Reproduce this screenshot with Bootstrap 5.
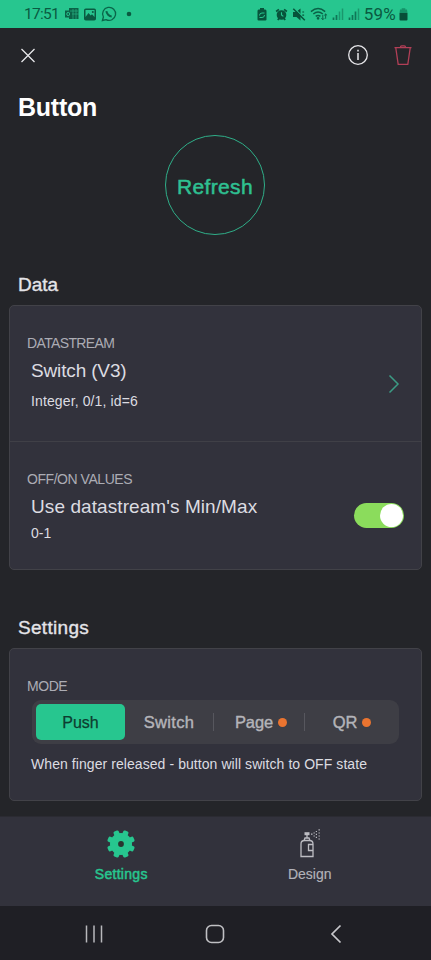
<!DOCTYPE html>
<html lang="en">
<head>
<meta charset="utf-8">
<meta name="viewport" content="width=device-width, initial-scale=1">
<title>Button</title>
<link href="https://cdn.jsdelivr.net/npm/bootstrap@5.3.0/dist/css/bootstrap.min.css" rel="stylesheet">
<style>
body{background:#242529;color:#dcdce1;font-family:"Liberation Sans",Arial,sans-serif;font-size:14px;line-height:20px;height:960px;overflow:hidden}
svg{display:block;flex:none}
.status{height:28px;background:#27c68f;color:#0a5a41;font-family:Roboto,sans-serif;padding:0 23px 0 24px}
.status-right{gap:4px}
.clock{font-size:15.5px;letter-spacing:-.75px;width:41px}
.notif-dot{margin-left:9px}
.battery-pct{font-size:17px;letter-spacing:.2px;margin-right:-1px}
.toolbar-row{height:54px;padding:0 18px 0 20px}
.toolbar-actions{gap:24px}
.page-title{font-size:25px;line-height:30px;letter-spacing:-.25px;color:#fff;margin:10px 0 0 18px}
.round-btn{width:100px;height:100px;border:1.5px solid #2fae88;background:none;color:#2fc092;font-size:21px;line-height:24px;letter-spacing:.35px;margin:13px auto 0 165px;padding:3px 0 0;-webkit-text-stroke:.5px #2fc092}
.section-title{font-size:19px;line-height:24px;color:#e4e4e8;margin:0 0 8px 18px;-webkit-text-stroke:.35px #e4e4e8}
.title-data{margin-top:38px}
.title-settings{margin-top:46px;letter-spacing:.3px}
.panel{background:#32323c;border:1px solid #424248;border-radius:5px;margin:0 9px}
.panel-line{border-bottom:1px solid #404047}
.caption-text{color:#acacb4;letter-spacing:-.45px;line-height:18px}
.caption-tight{letter-spacing:-.63px}
.value-text{font-size:19px;line-height:24px;letter-spacing:.08px;margin-top:7px}
.value-switch{letter-spacing:-.15px}
.detail-stream{margin-top:8px;letter-spacing:.12px}
.detail-range{margin-top:4px}
.chevron{margin-top:40px}
.stream-row{height:136px;padding:28px 20px 0 17px}
.range-row{height:127px;padding:28px 17px 0 17px}
.switch-pill{width:50px;height:25px;background:#8bdc5c;padding:1px;margin-top:33px}
.switch-pill span{width:23px;height:23px;background:#fff}
.mode-panel{height:153px;padding:28px 22px 0 17px}
.segment{background:#3e3e45;border-radius:9px;height:44px;margin:5px 0 0 5px;padding:4px;font-size:16.5px;color:#b4b4b9}
.seg-item{-webkit-text-stroke:.4px currentColor}
.seg-switch{letter-spacing:.3px}
.seg-pro{width:90px;letter-spacing:-.1px;padding-left:4px;gap:5px}
.seg-on{background:#27c68f;color:#0d3d30;border-radius:5px;height:36px;width:89px;font-size:16px;padding-top:1px;-webkit-text-stroke:.25px currentColor}
.seg-rule{width:1px;height:18px;background:#57575e}
.pip{width:9px;height:9px;background:#ea7430}
.mode-hint{margin-top:10px;letter-spacing:.07px}
.tabs-bar{height:90px;background:#32323c;border-top:1px solid #2b2b32;color:#b2b2b9}
.tab-item{padding-top:12px;gap:5px}
.tab-on{color:#27c68f;padding-left:27px}
.tab-on span{letter-spacing:.3px;-webkit-text-stroke:.5px #27c68f}
.tab-design{padding-right:27px}
.tab-design span{-webkit-text-stroke:.15px currentColor}
.sys-bar{height:54px;background:#1f1f25;padding:1px 88px 0 84px}
.home-key{margin-right:3px}
</style>
</head>
<body class="d-flex flex-column">
<div class="status d-flex align-items-center justify-content-between flex-shrink-0">
  <div class="d-flex align-items-center">
    <span class="clock">17:51</span>
    <svg width="14" height="12" viewBox="0 0 14 12"><path fill="#0b6247" d="M4 0h9.500v11H4V9.500H0v-7h4z"/><path d="M5 3h8M7 6h7M8 1v10M11 1v10" stroke="#27b381" stroke-width=".7"/><ellipse cx="3.200" cy="6" rx="1.400" ry="1.700" fill="none" stroke="#27c68f" stroke-width="1"/></svg>
    <svg class="ms-1" width="14" height="13" viewBox="0 0 14 13"><rect x="1" y=".5" width="12" height="12" rx="1.800" fill="#0a5a41"/><path d="M2.500 9l3-4 2.200 2.600L9 6.300l2.500 2.700V2H2.500z" fill="#27c68f"/><circle cx="9.800" cy="4" r="1" fill="#0a5a41"/></svg>
    <svg class="ms-1" width="16" height="16" viewBox="0 0 16 16" fill="none" stroke="#0a6549" stroke-width="1.300"><path d="M1.400 14.500l1-3.500A6.500 6.500 0 1 1 5 13.600z"/><path d="M5.400 5.200c.2 2.500 2.700 5.200 5.300 5.400" stroke-width="2"/></svg>
    <svg class="notif-dot" width="6" height="6"><circle cx="3" cy="3" r="2.300" fill="#0a5a41"/></svg>
  </div>
  <div class="status-right d-flex align-items-center">
    <svg width="10" height="13" viewBox="0 0 10 13"><path fill="#07543b" d="M3 0h4v1.500h1.200Q9.500 1.500 9.500 3v8.500q0 1-1.200 1H1.700q-1.200 0-1.200-1V3q0-1.500 1.200-1.500H3z"/><path d="M2.500 7.500q0-2.500 2.500-2.500h2.500M2.500 9.500H5q2.500 0 2.500-2.500" stroke="#27c68f" fill="none"/></svg>
    <svg class="ms-1" width="13" height="13" viewBox="0 0 14 13"><circle cx="7" cy="7" r="5.200" fill="#07543b"/><path d="M1.200 3.300l3-2.300M12.800 3.300l-3-2.300M3 12.500l1.500-2M11 12.500l-1.500-2" stroke="#07543b" stroke-width="1.800"/><path d="M7 4v3l2 1.500" stroke="#27c68f" stroke-width="1.200" fill="none"/></svg>
    <svg width="14" height="13" viewBox="0 0 14 13"><path d="M1 4h3l4.500-3.500v12L4.500 9H1z" fill="#07543b"/><path d="M2.300 .2l11 11" stroke="#27c68f" stroke-width="1.200"/><path d="M1.300 .7l11.500 11.500" stroke="#07543b" stroke-width="1.500"/><path d="M10.300 4h1.800M10.300 7.200h1.800" stroke="#07543b" stroke-width="1.200"/></svg>
    <svg width="18" height="14" viewBox="0 0 19 14" fill="none" stroke="#0a6046" stroke-width="1.500"><path d="M1 4.500q7.500-6.500 15 0M3.500 7q5-4.300 10 0M6 9.500q2.500-2 5 0"/><circle cx="8.500" cy="11.500" r=".7"/><path d="M13.500 8v5M12 11.500l1.500 1.500 1.500-1.500M16.500 12V7M15 8.500L16.500 7 18 8.500" stroke-width="1"/></svg>
    <svg width="12" height="12" viewBox="0 0 12 12"><path d="M1.500 12V9.500M4.500 12V7" stroke="#0f7656" stroke-width="1.700"/><path d="M7.500 12V3.500M10.500 12V.5" stroke="#1a976c" stroke-width="1.500"/></svg>
    <svg width="12" height="12" viewBox="0 0 12 12"><path d="M1.500 12V9.500M4.500 12V7M7.500 12V3.500" stroke="#0f7656" stroke-width="1.700"/><path d="M10.500 12V.5" stroke="#1a976c" stroke-width="1.500"/></svg>
    <span class="battery-pct">59%</span>
    <svg width="9" height="13" viewBox="0 0 9 13"><path fill="#159268" d="M2.700 .3h3.600v1.200H8L8.500 5H.5L1 1.500h1.700z"/><path fill="#084e38" d="M.5 5h8v6.500q0 1-1 1h-6q-1 0-1-1z"/></svg>
  </div>
</div>

<header class="toolbar-row d-flex align-items-center justify-content-between flex-shrink-0">
  <svg width="16" height="16" viewBox="0 0 16 16" stroke="#e7e7ea" stroke-width="1.300"><path d="M1.500 2l13 13M14.500 2l-13 13"/></svg>
  <div class="toolbar-actions d-flex align-items-center">
    <svg width="22" height="22" viewBox="0 0 22 22" fill="none" stroke="#e7e7ea"><circle cx="11" cy="11" r="9.300" stroke-width="1.300"/><path d="M11 9v7M11 5.800v1.600" stroke-width="1.500"/></svg>
    <svg width="20" height="22" viewBox="0 0 20 22" fill="none" stroke="#b23f57" stroke-width="1.300"><path d="M1.500 3.700h17M7.500 3.300q0-1.500 1.200-1.500h2.600q1.200 0 1.200 1.500M2.800 4l2.400 16.300h9.600L17.200 4"/></svg>
  </div>
</header>

<h1 class="page-title fw-bold flex-shrink-0">Button</h1>
<button class="round-btn rounded-circle flex-shrink-0" type="button">Refresh</button>

<h2 class="section-title title-data fw-normal flex-shrink-0">Data</h2>
<section class="panel flex-shrink-0">
  <div class="stream-row panel-line d-flex justify-content-between">
    <div>
      <div class="caption-text caption-tight">DATASTREAM</div>
      <div class="ps-1">
        <div class="value-text value-switch">Switch (V3)</div>
        <div class="detail-stream">Integer, 0/1, id=6</div>
      </div>
    </div>
    <svg class="chevron" width="15" height="20" viewBox="0 0 15 20" fill="none" stroke="#3c9b84" stroke-width="1.500"><path d="M3.500 1.500L12 10l-8.500 8.500"/></svg>
  </div>
  <div class="range-row d-flex justify-content-between">
    <div>
      <div class="caption-text">OFF/ON VALUES</div>
      <div class="ps-1">
        <div class="value-text">Use datastream's Min/Max</div>
        <div class="detail-range">0-1</div>
      </div>
    </div>
    <div class="switch-pill rounded-pill d-flex justify-content-end"><span class="rounded-circle"></span></div>
  </div>
</section>

<h2 class="section-title title-settings fw-normal flex-shrink-0">Settings</h2>
<section class="panel mode-panel flex-shrink-0">
  <div class="caption-text">MODE</div>
  <div class="segment d-flex align-items-center">
    <div class="seg-on d-flex align-items-center justify-content-center">Push</div>
    <div class="seg-item seg-switch flex-fill text-center">Switch</div>
    <div class="seg-rule"></div>
    <div class="seg-item seg-pro d-flex align-items-center justify-content-center">Page<span class="pip rounded-circle"></span></div>
    <div class="seg-rule"></div>
    <div class="seg-item seg-pro d-flex align-items-center justify-content-center">QR<span class="pip rounded-circle"></span></div>
  </div>
  <div class="mode-hint text-nowrap ps-1">When finger released - button will switch to OFF state</div>
</section>

<nav class="tabs-bar row g-0 mt-auto flex-shrink-0">
  <div class="col tab-item tab-on d-flex flex-column align-items-center">
    <svg width="30" height="30" viewBox="-15 -15 30 30" fill="#27c68f"><circle r="11"/><g transform="rotate(22.500)"><rect x="-2.800" y="-14" width="5.600" height="28" rx="1.500"/><rect x="-2.800" y="-14" width="5.600" height="28" rx="1.500" transform="rotate(45)"/><rect x="-2.800" y="-14" width="5.600" height="28" rx="1.500" transform="rotate(90)"/><rect x="-2.800" y="-14" width="5.600" height="28" rx="1.500" transform="rotate(135)"/></g><circle r="2.900" fill="#29352f"/></svg>
    <span>Settings</span>
  </div>
  <div class="col tab-item tab-design d-flex flex-column align-items-center">
    <svg width="24" height="30" viewBox="0 0 24 30" fill="none" stroke="#bdbdc3" stroke-width="1.300"><path d="M3 27.500V15q0-3.500 3.500-3.500h5q3.500 0 3.500 3.500v12.500zM6 11.500l1-2.500h4l1 2.500M15 15.500h-4.500v6H15M9 9V6"/><rect x="6.500" y="3.200" width="5" height="3" fill="#bdbdc3" stroke="none"/><path d="M13 5.200h1.500M15.500 4h1.300M15.500 7h1.300M17.800 2.500H19M17.800 5.400H19M17.800 8.300H19M20.500 .9h1.300M20.500 4h1.300M20.500 7h1.300M20.500 10h1.300" stroke-width="1.200"/></svg>
    <span>Design</span>
  </div>
</nav>
<footer class="sys-bar d-flex align-items-center justify-content-between flex-shrink-0">
  <svg width="20" height="20" viewBox="0 0 20 20" stroke="#b8b8bc" stroke-width="1.500"><path d="M2.500 1.500v17M10 1.500v17M17.500 1.500v17"/></svg>
  <svg class="home-key" width="20" height="20" viewBox="0 0 20 20" fill="none" stroke="#c0c0c4" stroke-width="1.600"><rect x="1.500" y="1.500" width="17" height="17" rx="5"/></svg>
  <svg width="14" height="20" viewBox="0 0 14 20" fill="none" stroke="#c8c8cc" stroke-width="1.700"><path d="M11.500 1.500L3 10l8.500 8.500"/></svg>
</footer>
<script src="https://cdn.jsdelivr.net/npm/bootstrap@5.3.0/dist/js/bootstrap.bundle.min.js"></script>
</body>
</html>
